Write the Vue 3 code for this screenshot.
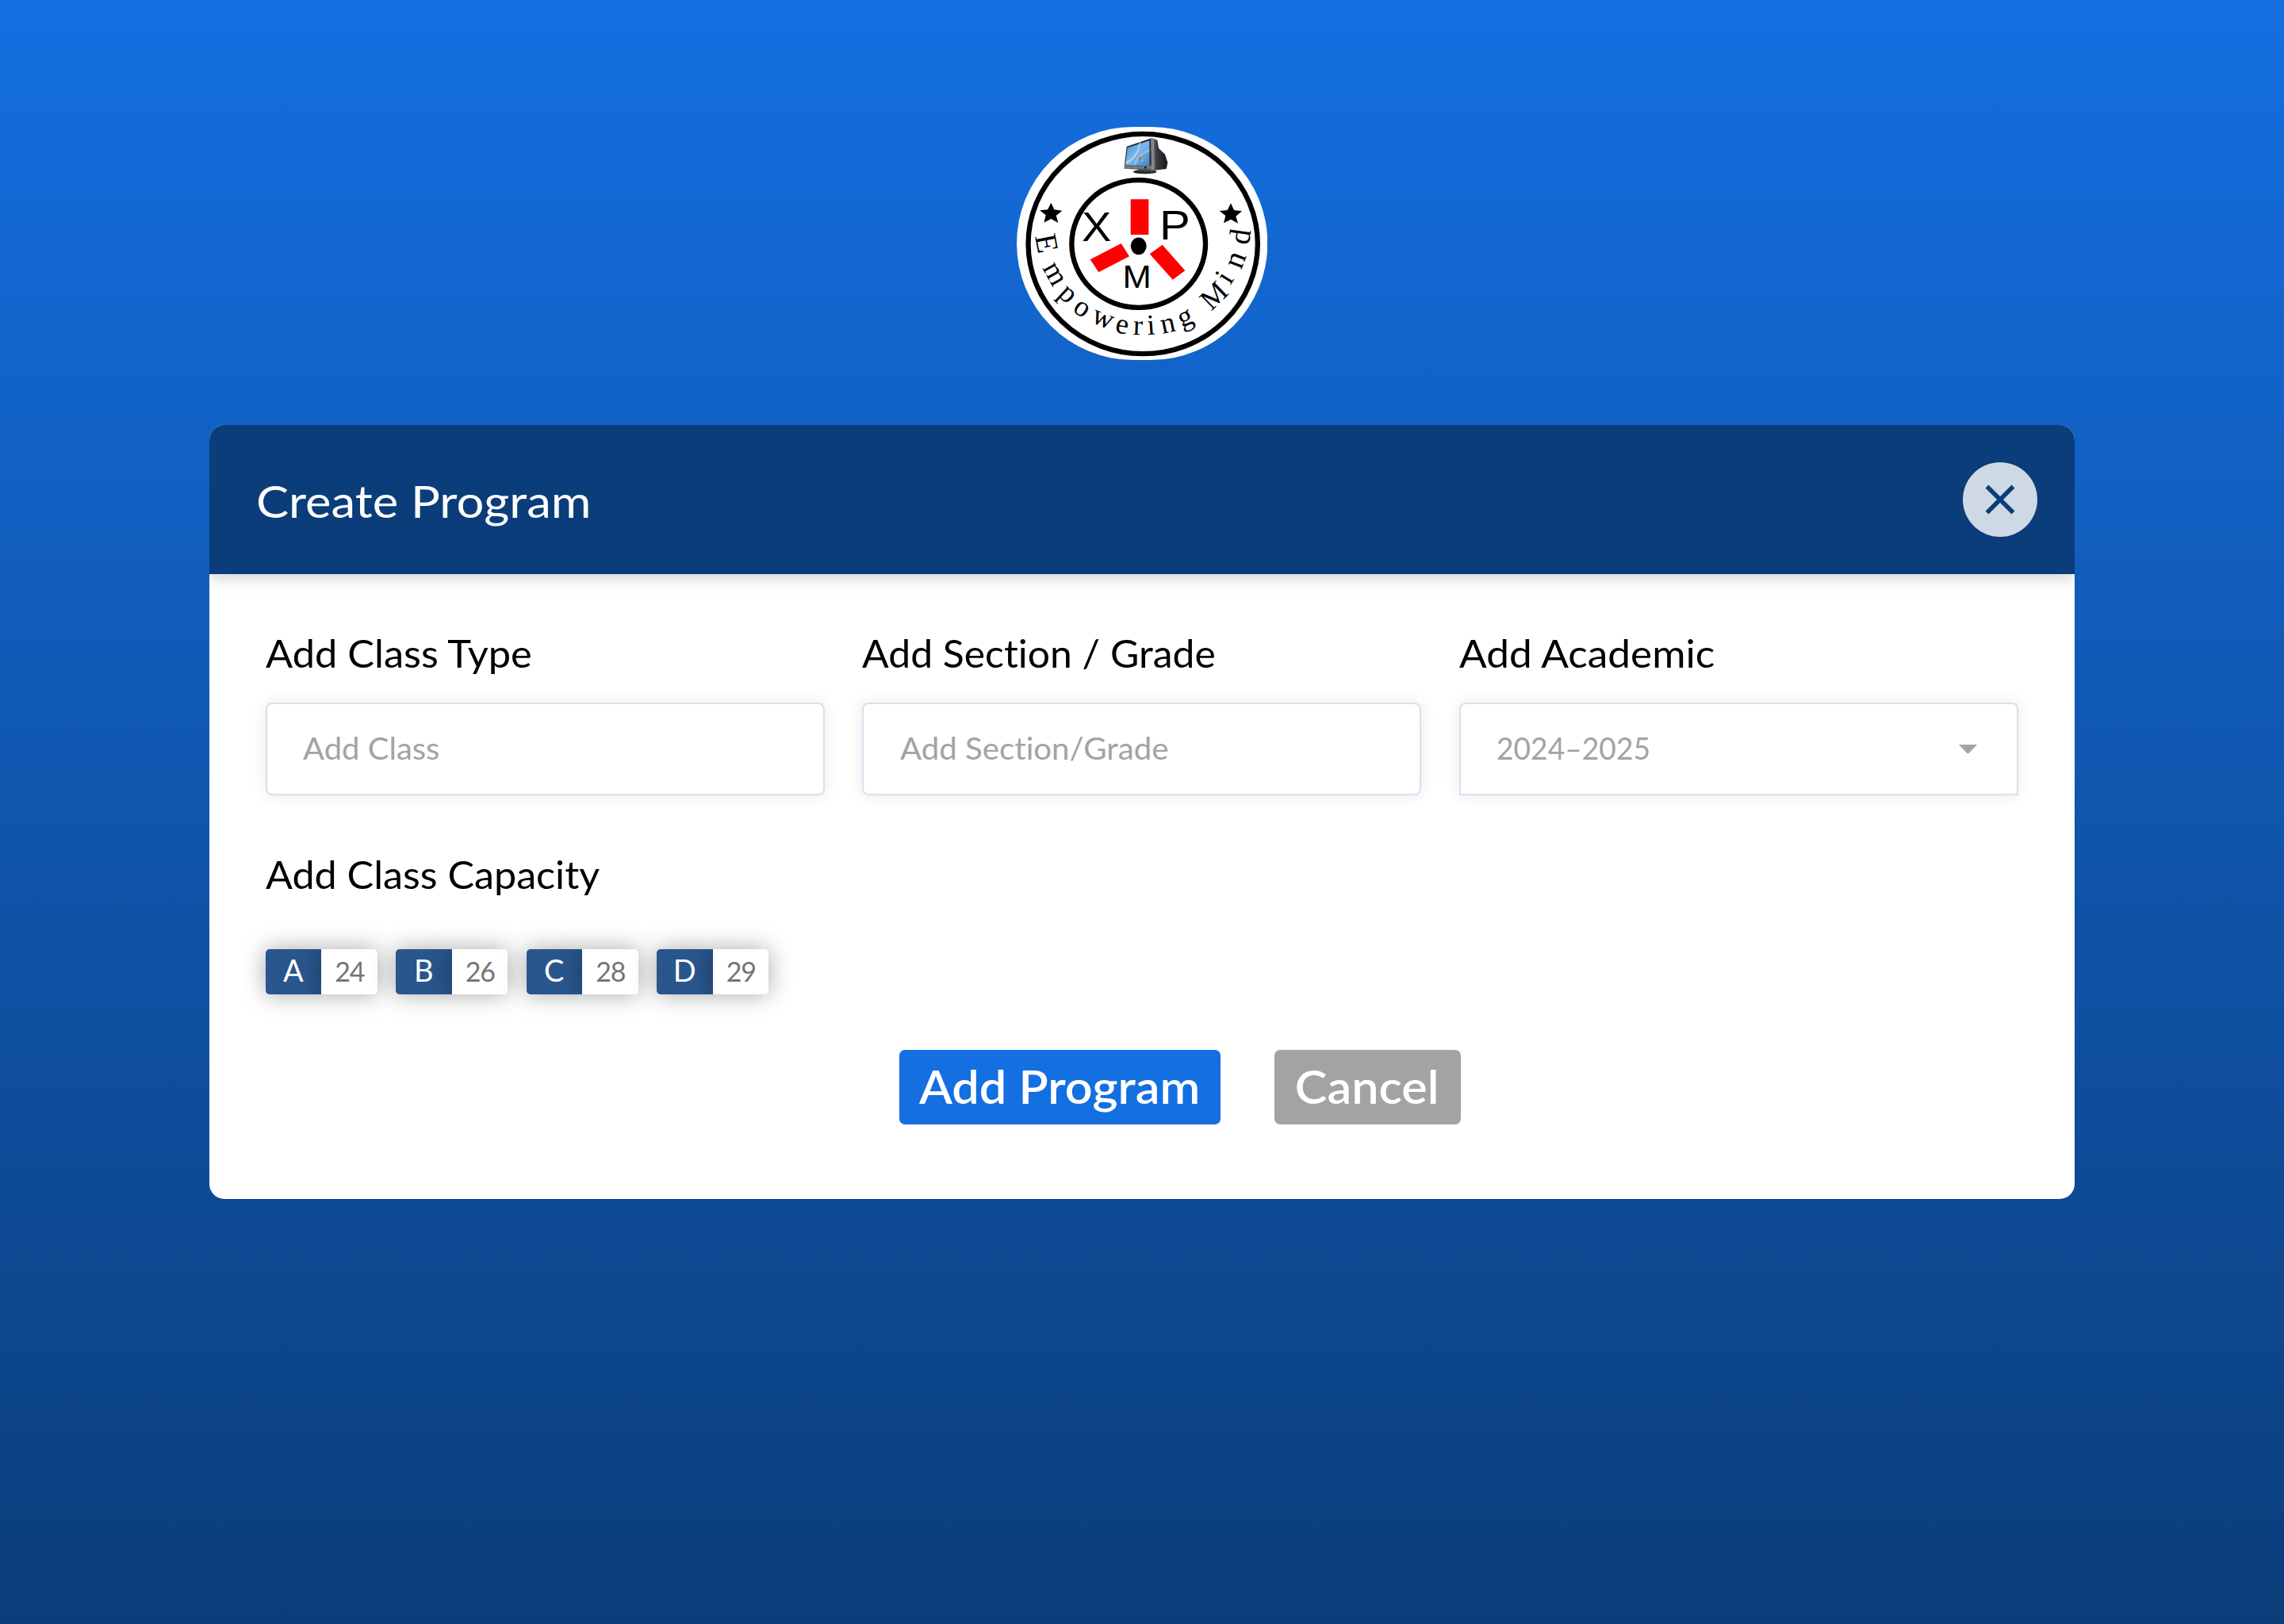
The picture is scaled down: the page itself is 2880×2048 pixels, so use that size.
<script setup>
const motto = [
  { ch: 'E', x: 112, y: 478, r: 79, size: 116 },
  { ch: 'm', x: 153, y: 601, r: 61 },
  { ch: 'p', x: 208, y: 685, r: 43 },
  { ch: 'o', x: 267, y: 741, r: 33 },
  { ch: 'w', x: 351, y: 783, r: 22 },
  { ch: 'e', x: 430, y: 811, r: 10 },
  { ch: 'r', x: 494, y: 817, r: 2 },
  { ch: 'i', x: 546, y: 816, r: -4 },
  { ch: 'n', x: 614, y: 807, r: -12 },
  { ch: 'g', x: 685, y: 780, r: -23 },
  { ch: 'M', x: 807, y: 694, r: -44 },
  { ch: 'i', x: 852, y: 618, r: -58 },
  { ch: 'n', x: 895, y: 545, r: -69, size: 116 },
  { ch: 'd', x: 918, y: 450, r: -82, size: 114 },
]

const fields = [
  { id: 'class', label: 'Add Class Type', labelStretch: 1.053, value: 'Add Class', valueStretch: 1.053 },
  { id: 'section', label: 'Add Section / Grade', labelStretch: 1.039, value: 'Add Section/Grade', valueStretch: 1.058 },
  { id: 'year', label: 'Add Academic', labelStretch: 1.07, value: '2024–2025', valueStretch: 0.978, select: true },
]

const capacities = [
  { name: 'A', seats: 24 },
  { name: 'B', seats: 26 },
  { name: 'C', seats: 28 },
  { name: 'D', seats: 29 },
]

const stretch = (ratio) => ({ transform: `scaleX(${ratio})` })
</script>

<template>
  <main class="page">
    <svg class="logo" viewBox="36 30 949 882" aria-label="XPM Empowering Mind">
      <defs>
        <linearGradient id="screen" x1="0" y1="0" x2="1" y2="1">
          <stop offset="0" stop-color="#4a8fd2" />
          <stop offset="0.5" stop-color="#7db6ea" />
          <stop offset="1" stop-color="#3f86cc" />
        </linearGradient>
        <linearGradient id="shell" x1="0" y1="0" x2="1" y2="0">
          <stop offset="0" stop-color="#6b7074" />
          <stop offset="0.3" stop-color="#3a3d40" />
          <stop offset="1" stop-color="#151618" />
        </linearGradient>
        <linearGradient id="bezel" x1="0" y1="0" x2="0" y2="1">
          <stop offset="0" stop-color="#24282c" />
          <stop offset="0.8" stop-color="#2f3337" />
          <stop offset="0.9" stop-color="#7c8185" />
          <stop offset="1" stop-color="#4c5053" />
        </linearGradient>
      </defs>
      <rect x="36" y="30" width="949" height="882" rx="441" ry="441" fill="#fff" />
      <ellipse cx="513.5" cy="472.5" rx="434" ry="416" class="ring" />
      <ellipse cx="497" cy="472.5" rx="253" ry="241" class="ring" />

      <ellipse cx="521" cy="200" rx="44" ry="8" fill="#222427" />
      <path d="M490 185h70l-6 16h-52z" fill="#3a3d40" />
      <path d="M548 72l20 8 5 31 24 23 10 31-5 24-49 6z" fill="url(#shell)" />
      <path d="M452 104l96-32 6 123-112-7z" fill="url(#bezel)" />
      <path d="M543 72l12 4 2 116-11 3z" fill="#85898d" />
      <path d="M455 109l83-27v95l-91-2z" fill="url(#screen)" />
      <path d="M449 160q40-10 50-72l6-2q-6 62-56 84z" fill="#d7ecfc" opacity="0.55" />
      <path d="M478 174q10-40 60-60v8q-38 14-52 52z" fill="#c3e0f8" opacity="0.4" />
      <path d="M499 144l7-1v7h-7z" fill="#e2552b" />
      <path d="M507 143l7 2-1 7-6-1z" fill="#7db53a" />
      <path d="M498 152l7-1v7l-6-1z" fill="#2f77d0" />
      <path d="M506 152l7 1-1 7-6-1z" fill="#f2c433" />
      <circle cx="523" cy="184" r="4" fill="#15171a" />

      <path class="ink" d="M166 317l12 26 30 4-23 19 8 27-27-15-27 14 7-28-23-18 30-3z" />
      <path class="ink" d="M846 319l12 26 30 4-23 19 8 27-27-15-27 14 7-28-23-18 30-3z" />

      <path class="blade" d="M467 304h68v134h-68z" />
      <path class="blade" d="M314 532l117-61 31 49-116 60z" />
      <path class="blade" d="M539 511l48-35 86 98-47 34z" />
      <ellipse cx="497" cy="481" rx="30" ry="32.5" class="ink" />

      <text class="initial" transform="translate(338 463) scale(1.07 1)" font-size="157">X</text>
      <text class="initial" transform="translate(634 455) scale(1.12 1)" font-size="156">P</text>
      <text class="initial" transform="translate(491 638) scale(1.08 1)" font-size="121">M</text>

      <text
        v-for="(m, i) in motto"
        :key="i"
        class="motto"
        :font-size="m.size || 110"
        :transform="`translate(${m.x} ${m.y}) rotate(${m.r})`"
      >{{ m.ch }}</text>
    </svg>

    <section class="card">
      <header class="head">
        <h1 class="title">Create Program</h1>
        <button class="close" type="button" aria-label="Close">
          <svg viewBox="0 0 94 94" width="94" height="94">
            <path d="M30.500 30.500l33 33M63.500 30.500l-33 33" />
          </svg>
        </button>
      </header>

      <div class="body">
        <div class="fields">
          <div v-for="f in fields" :key="f.id" class="field">
            <span class="label" :style="stretch(f.labelStretch)">{{ f.label }}</span>
            <div class="box" :class="{ select: f.select }">
              <span class="value" :style="stretch(f.valueStretch)">{{ f.value }}</span>
              <svg v-if="f.select" class="caret" viewBox="0 0 23 12"><path d="M0 0h23l-11.500 12z" /></svg>
            </div>
          </div>
        </div>

        <div class="label capacity" :style="stretch(1.047)">Add Class Capacity</div>
        <div class="chips">
          <div v-for="c in capacities" :key="c.name" class="chip">
            <span class="name">{{ c.name }}</span>
            <span class="seats">{{ c.seats }}</span>
          </div>
        </div>

        <div class="actions">
          <button class="btn primary" type="button"><span>Add Program</span></button>
          <button class="btn cancel" type="button"><span>Cancel</span></button>
        </div>
      </div>
    </section>
  </main>
</template>

<style>
body {
  margin: 0;
}
</style>

<style scoped>
.page {
  box-sizing: border-box;
  width: 2880px;
  height: 2048px;
  padding-top: 160px;
  display: flex;
  flex-direction: column;
  align-items: center;
  background: linear-gradient(180deg, #146fe1 0%, #0b3d7a 100%);
  font-family: Lato, "Liberation Sans", sans-serif;
  font-variant-ligatures: none;
}

.logo {
  display: block;
  width: 316.4px;
  height: 294px;
}
.ring {
  fill: none;
  stroke: #000;
  stroke-width: 19;
}
.ink {
  fill: #000;
}
.blade {
  fill: #f00;
}
.initial {
  font-family: "Liberation Sans", sans-serif;
  text-anchor: middle;
}
.motto {
  font-family: "Liberation Serif", serif;
  text-anchor: middle;
}

.card {
  width: 2352px;
  height: 976px;
  margin-top: 82px;
  border-radius: 19px;
  background: #fff;
  overflow: hidden;
}
.head {
  position: relative;
  box-sizing: border-box;
  height: 188px;
  padding: 0 47px 0 58.5px;
  display: flex;
  align-items: center;
  justify-content: space-between;
  background: #0b3d7a;
  box-shadow: 0 4px 20px rgba(0, 0, 0, 0.2);
}
.title {
  margin: 1px 0 0;
  color: #fff;
  font-size: 57px;
  line-height: 68px;
  font-weight: 400;
  transform: scaleX(1.08);
  transform-origin: left center;
}
.close {
  width: 94px;
  height: 94px;
  padding: 0;
  border: 0;
  border-radius: 50%;
  background: #cfd8e5;
}
.close svg {
  display: block;
}
.close path {
  stroke: #0b3d7a;
  stroke-width: 5.5;
  fill: none;
}

.body {
  padding: 71px 70.5px 0 70.5px;
}
.fields {
  display: flex;
  gap: 47.5px;
}
.field {
  width: 705px;
}
.label {
  display: block;
  width: max-content;
  color: #000;
  font-size: 48px;
  line-height: 58px;
  white-space: nowrap;
  transform-origin: left center;
}
.box {
  box-sizing: border-box;
  height: 117px;
  margin-top: 33px;
  padding: 0 50px 4px 45.5px;
  display: flex;
  align-items: center;
  justify-content: space-between;
  border: 2px solid #dcddf0;
  border-radius: 8px;
  background: #fff;
  box-shadow: 0 0 20px rgba(0, 0, 0, 0.09);
  color: #a3a3a3;
  font-size: 38px;
}
.box.select {
  border-radius: 8px 8px 0 0;
}
.value {
  transform-origin: left center;
}
.caret {
  width: 23px;
  height: 12px;
  margin-top: 5px;
  fill: #a3a3a3;
}
.capacity {
  margin-top: 71px;
}

.chips {
  display: flex;
  gap: 23.500px;
  margin-top: 65px;
}
.chip {
  width: 141px;
  height: 56.5px;
  display: flex;
}
.chip span {
  box-sizing: border-box;
  width: 50%;
  display: flex;
  align-items: center;
  justify-content: center;
  box-shadow: 0 0 30px rgba(0, 0, 0, 0.35);
}
.name {
  padding: 0 0 5px;
  border-radius: 5px 0 0 5px;
  background: #29568c;
  color: #fff;
  font-size: 38px;
}
.seats {
  padding: 0 0 1px 1px;
  border-radius: 0 5px 5px 0;
  background: #fff;
  color: #757575;
  font-size: 34px;
  letter-spacing: -1.2px;
}

.actions {
  display: flex;
  gap: 67.5px;
  margin: 70px 0 0 799.5px;
}
.btn {
  height: 94.5px;
  padding: 0 0 1px;
  border: 0;
  border-radius: 7px;
  color: #fff;
  font-family: inherit;
  font-size: 57px;
  font-weight: 600;
  line-height: 68px;
  white-space: nowrap;
}
.btn span {
  display: inline-block;
  transform: scaleX(1.073);
}
.primary {
  width: 405px;
  background: #146fe1;
}
.cancel {
  width: 235px;
  background: #a3a3a3;
}
</style>
